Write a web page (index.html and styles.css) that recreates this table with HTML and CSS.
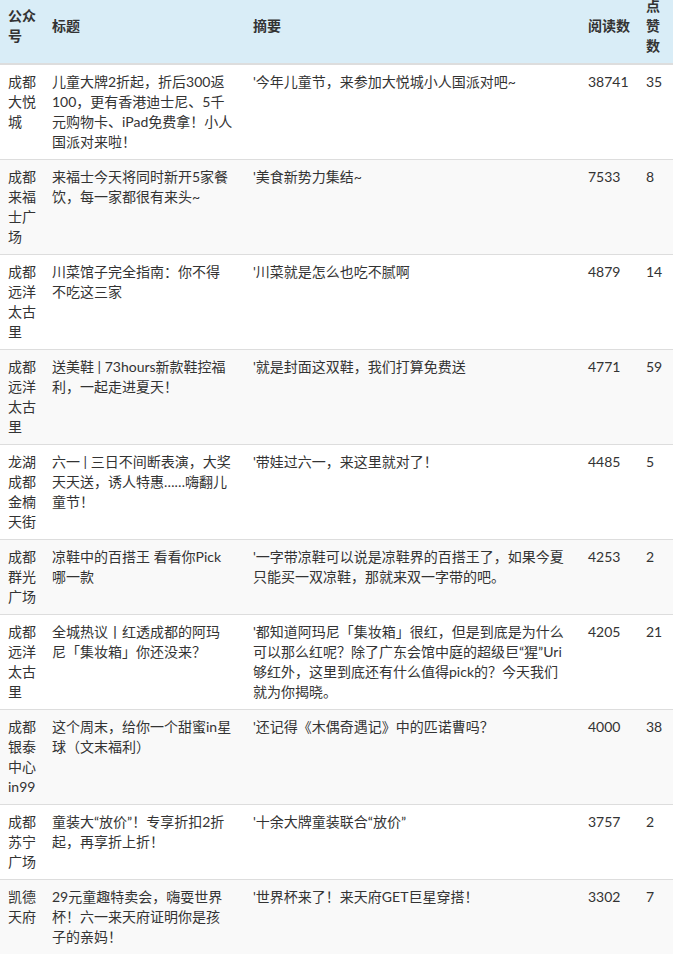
FILE: index.html
```html
<!DOCTYPE html>
<html>
<head>
    <meta charset="utf-8">
    <title>公众号文章</title>
    <link rel="stylesheet" href="styles.css">
</head>
<body>
    <table class="table table-striped">
        <colgroup>
            <col class="col-account">
            <col class="col-title">
            <col class="col-digest">
            <col class="col-read">
            <col class="col-like">
        </colgroup>
        <thead>
            <tr class="info">
                <th>公众号</th>
                <th>标题</th>
                <th>摘要</th>
                <th>阅读数</th>
                <th>点赞数</th>
            </tr>
        </thead>
        <tbody>
            <tr>
                <td>成都大悦城</td>
                <td>儿童大牌2折起，折后300返100，更有香港迪士尼、5千元购物卡、iPad免费拿！小人国派对来啦！</td>
                <td>'今年儿童节，来参加大悦城小人国派对吧~</td>
                <td>38741</td>
                <td>35</td>
            </tr>
            <tr>
                <td>成都来福士广场</td>
                <td>来福士今天将同时新开5家餐饮，每一家都很有来头~</td>
                <td>'美食新势力集结~</td>
                <td>7533</td>
                <td>8</td>
            </tr>
            <tr>
                <td>成都远洋太古里</td>
                <td>川菜馆子完全指南：你不得不吃这三家</td>
                <td>'川菜就是怎么也吃不腻啊</td>
                <td>4879</td>
                <td>14</td>
            </tr>
            <tr>
                <td>成都远洋太古里</td>
                <td>送美鞋 | 73hours新款鞋控福利，一起走进夏天！</td>
                <td>'就是封面这双鞋，我们打算免费送</td>
                <td>4771</td>
                <td>59</td>
            </tr>
            <tr>
                <td>龙湖成都金楠天街</td>
                <td>六一 | 三日不间断表演，大奖天天送，诱人特惠……嗨翻儿童节！</td>
                <td>'带娃过六一，来这里就对了！</td>
                <td>4485</td>
                <td>5</td>
            </tr>
            <tr>
                <td>成都群光广场</td>
                <td>凉鞋中的百搭王 看看你Pick哪一款</td>
                <td>'一字带凉鞋可以说是凉鞋界的百搭王了，如果今夏只能买一双凉鞋，那就来双一字带的吧。</td>
                <td>4253</td>
                <td>2</td>
            </tr>
            <tr>
                <td>成都远洋太古里</td>
                <td>全城热议丨红透成都的阿玛尼「集妆箱」你还没来？</td>
                <td>'都知道阿玛尼「集妆箱」很红，但是到底是为什么可以那么红呢？除了广东会馆中庭的超级巨“猩”Uri够红外，这里到底还有什么值得pick的？今天我们就为你揭晓。</td>
                <td>4205</td>
                <td>21</td>
            </tr>
            <tr>
                <td>成都银泰中心in99</td>
                <td>这个周末，给你一个甜蜜in星球（文末福利）</td>
                <td>'还记得《木偶奇遇记》中的匹诺曹吗？</td>
                <td>4000</td>
                <td>38</td>
            </tr>
            <tr>
                <td>成都苏宁广场</td>
                <td>童装大“放价”！专享折扣2折起，再享折上折！</td>
                <td>'十余大牌童装联合“放价”</td>
                <td>3757</td>
                <td>2</td>
            </tr>
            <tr>
                <td>凯德天府</td>
                <td>29元童趣特卖会，嗨耍世界杯！六一来天府证明你是孩子的亲妈！</td>
                <td>'世界杯来了！来天府GET巨星穿搭！</td>
                <td>3302</td>
                <td>7</td>
            </tr>
        </tbody>
    </table>
</body>
</html>
```
FILE: styles.css
```css
body {
  font-family: Lato, "Noto Sans CJK SC", sans-serif;
  font-size: 14px;
  line-height: 20px;
  color: #333;
  background-color: #fff;
  margin: 0;
  padding: 0;
}
.table {
  width: 673px;
  table-layout: fixed;
  border-collapse: collapse;
  border-spacing: 0;
  margin-top: -11px;
}
.col-account {
  width: 44px;
}
.col-title {
  width: 201px;
}
.col-digest {
  width: 335px;
}
.col-read {
  width: 58px;
}
.col-like {
  width: 35px;
}
.table th,
.table td {
  padding: 7px 8px;
  text-align: left;
  word-wrap: break-word;
}
/* title and digest text wraps a little short of the cell edge */
.table td:nth-child(2) {
  padding-right: 12px;
}
.table td:nth-child(3) {
  padding-right: 13px;
}
.table th {
  font-weight: bold;
  vertical-align: middle;
  border-bottom: 2px solid #ddd;
}
.table td {
  vertical-align: top;
  border-top: 1px solid #ddd;
}
.table tr.info th {
  background-color: #d9edf7;
}
.table-striped tbody tr:nth-child(even) {
  background-color: #f9f9f9;
}
```
